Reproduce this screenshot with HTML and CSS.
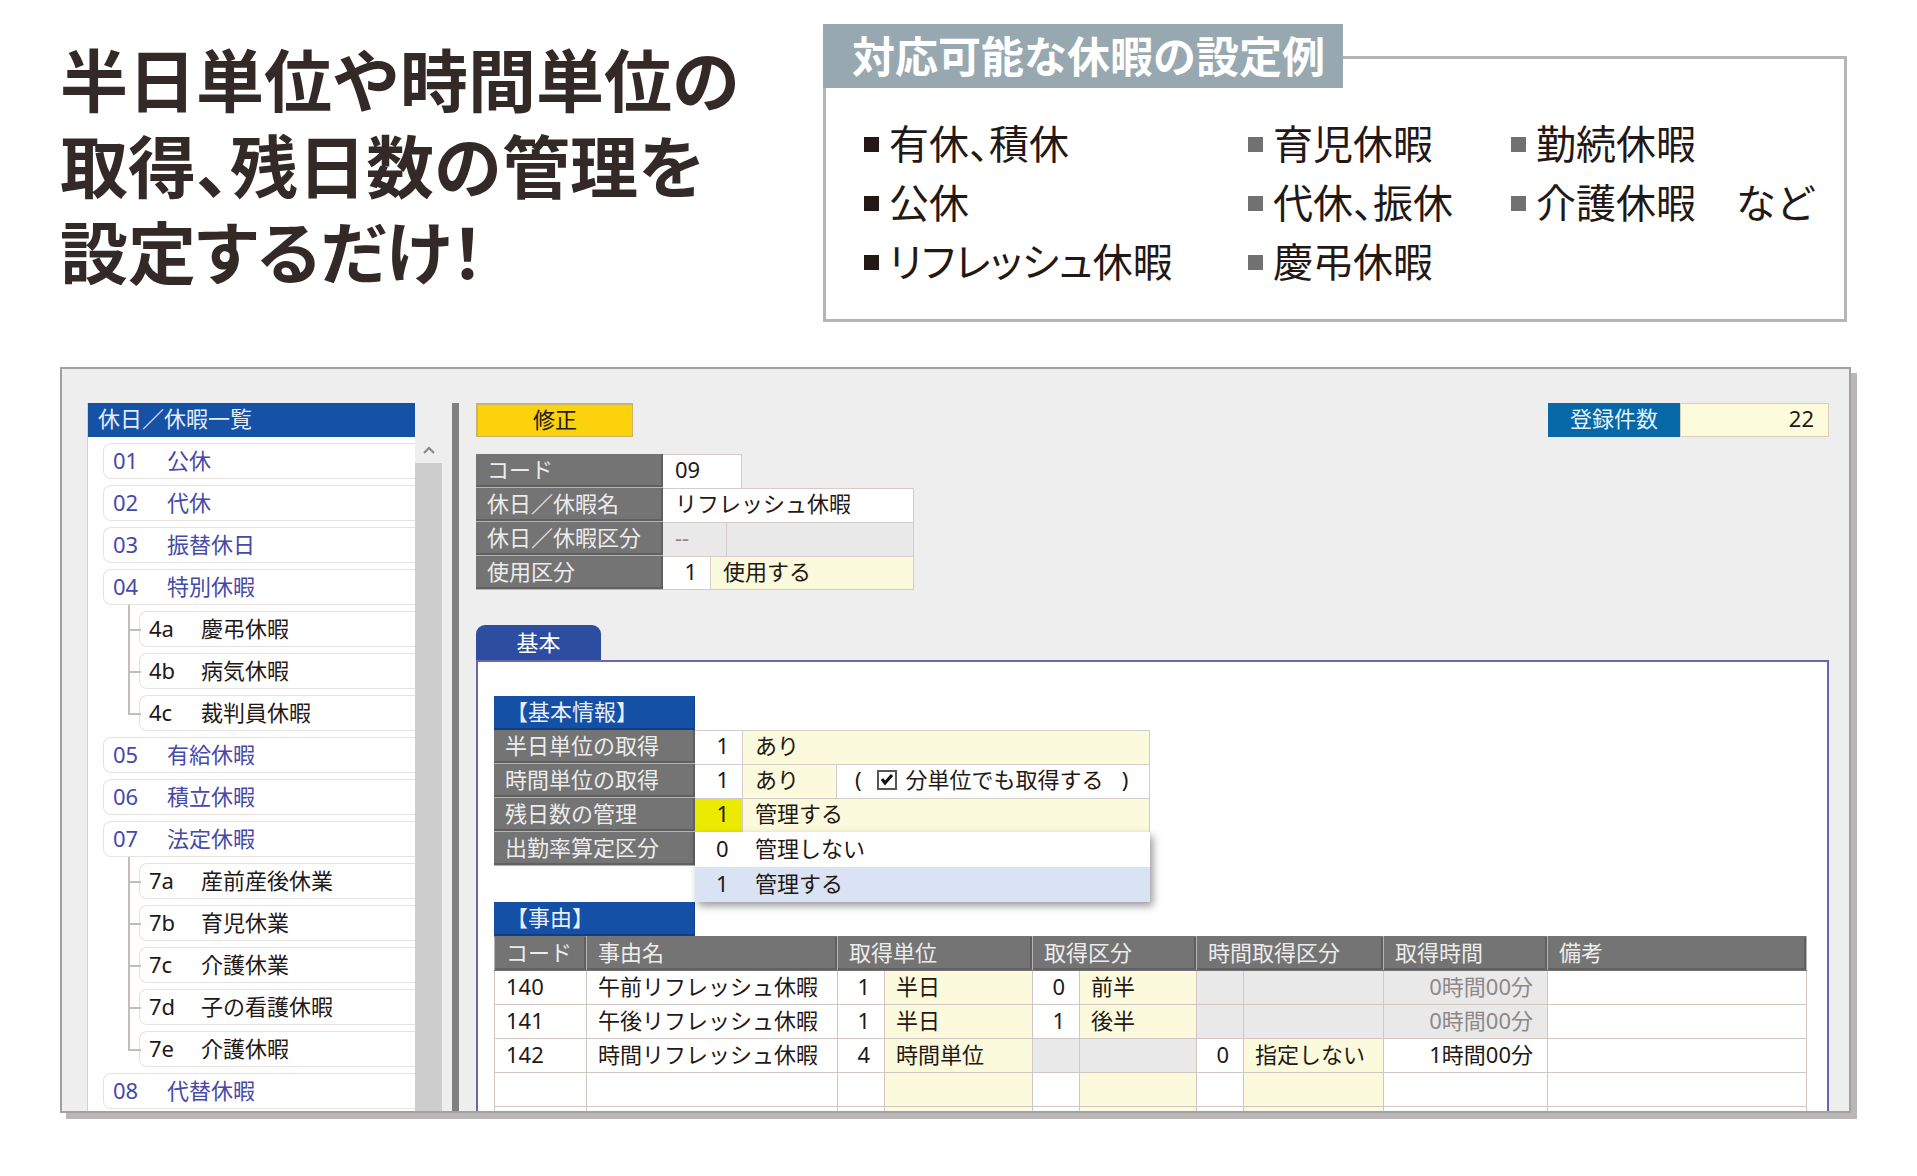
FILE: index.html
```html
<!DOCTYPE html>
<html lang="ja">
<head>
<meta charset="utf-8">
<meta name="viewport" content="width=device-width, initial-scale=1">
<title>休日／休暇の設定</title>
<link rel="stylesheet" href="styles.css">
</head>
<body>
<header class="hero">
  <h1 class="hero-title">半日単位や時間単位の<br>取得<span class="tight">、</span>残日数の管理を<br><span class="kana">設定するだけ！</span></h1>
  <section class="examples">
    <h2 class="examples-title">対応可能な休暇の設定例</h2>
    <ul class="examples-list examples-dark">
      <li>有休<span class="tight">、</span>積休</li>
      <li>公休</li>
      <li class="kana">リフレッシュ休暇</li>
    </ul>
    <ul class="examples-list">
      <li>育児休暇</li>
      <li>代休<span class="tight">、</span>振休</li>
      <li>慶弔休暇</li>
    </ul>
    <ul class="examples-list">
      <li>勤続休暇</li>
      <li>介護休暇　など</li>
    </ul>
  </section>
</header>

<main class="app">
  <nav class="sidebar" aria-labelledby="side-title">
    <h2 class="side-title" id="side-title">休日／休暇一覧</h2>
    <ul class="tree">
      <li><button class="node"><span>01</span>公休</button></li>
      <li><button class="node"><span>02</span>代休</button></li>
      <li><button class="node"><span>03</span>振替休日</button></li>
      <li><button class="node"><span>04</span>特別休暇</button>
        <ul class="branch">
          <li><button class="node"><span>4a</span>慶弔休暇</button></li>
          <li><button class="node"><span>4b</span>病気休暇</button></li>
          <li><button class="node"><span>4c</span>裁判員休暇</button></li>
        </ul>
      </li>
      <li><button class="node"><span>05</span>有給休暇</button></li>
      <li><button class="node"><span>06</span>積立休暇</button></li>
      <li><button class="node"><span>07</span>法定休暇</button>
        <ul class="branch">
          <li><button class="node"><span>7a</span>産前産後休業</button></li>
          <li><button class="node"><span>7b</span>育児休業</button></li>
          <li><button class="node"><span>7c</span>介護休業</button></li>
          <li><button class="node"><span>7d</span>子の看護休暇</button></li>
          <li><button class="node"><span>7e</span>介護休暇</button></li>
        </ul>
      </li>
      <li><button class="node"><span>08</span>代替休暇</button></li>
    </ul>
  </nav>
  <div class="scrollbar">
    <button class="scroll-up" aria-label="上へ">
      <svg width="12" height="8" viewBox="0 0 12 8" fill="none" stroke="#8c8480" stroke-width="2"><path d="M1 7 6 2l5 5"/></svg>
    </button>
    <div class="scroll-thumb"></div>
  </div>
  <div class="divider"></div>

  <div class="content">
    <div class="topbar">
      <button class="mode">修正</button>
      <dl class="count"><dt>登録件数</dt><dd>22</dd></dl>
    </div>

    <form class="fields">
      <div class="row"><label class="label" for="code">コード</label><input class="cell code" id="code" value="09"></div>
      <div class="row"><label class="label" for="name">休日／休暇名</label><input class="cell wide" id="name" value="リフレッシュ休暇"></div>
      <div class="row"><label class="label" for="kind">休日／休暇区分</label><input class="cell kind off" id="kind" value="--" disabled><output class="cell fill off"></output></div>
      <div class="row"><label class="label" for="use">使用区分</label><input class="cell num" id="use" value="1"><output class="cell fill pale">使用する</output></div>
    </form>

    <button class="tab">基本</button>
    <div class="panel">
      <form class="info">
        <h3 class="section">【基本情報】</h3>
        <div class="row"><label class="label" for="half">半日単位の取得</label><input class="cell num" id="half" value="1"><output class="cell fill pale">あり</output></div>
        <div class="row"><label class="label" for="hour">時間単位の取得</label><input class="cell num" id="hour" value="1"><output class="cell short pale">あり</output>
          <div class="cell fill minute"><span>(</span><input type="checkbox" id="minute" class="check" checked><label for="minute">分単位でも取得する</label><span class="close">)</span></div></div>
        <div class="row"><label class="label" for="rest">残日数の管理</label><input class="cell num active" id="rest" value="1"><output class="cell fill pale">管理する</output>
          <ul class="menu" role="listbox" aria-label="残日数の管理">
            <li role="option"><span>0</span>管理しない</li>
            <li role="option" aria-selected="true"><span>1</span>管理する</li>
          </ul>
        </div>
        <div class="row"><span class="label">出勤率算定区分</span></div>
      </form>

      <h3 class="section">【事由】</h3>
      <table class="reasons">
        <colgroup><col class="c-code"><col class="c-name"><col class="c-num"><col class="c-unit"><col class="c-num"><col class="c-part"><col class="c-num"><col class="c-hour"><col class="c-time"><col></colgroup>
        <thead>
          <tr><th>コード</th><th>事由名</th><th colspan="2">取得単位</th><th colspan="2">取得区分</th><th colspan="2">時間取得区分</th><th>取得時間</th><th>備考</th></tr>
        </thead>
        <tbody>
          <tr><td>140</td><td>午前リフレッシュ休暇</td><td class="right">1</td><td class="pale">半日</td><td class="right">0</td><td class="pale">前半</td><td class="off"></td><td class="off"></td><td class="right off">0時間00分</td><td></td></tr>
          <tr><td>141</td><td>午後リフレッシュ休暇</td><td class="right">1</td><td class="pale">半日</td><td class="right">1</td><td class="pale">後半</td><td class="off"></td><td class="off"></td><td class="right off">0時間00分</td><td></td></tr>
          <tr><td>142</td><td>時間リフレッシュ休暇</td><td class="right">4</td><td class="pale">時間単位</td><td class="off"></td><td class="off"></td><td class="right">0</td><td class="pale">指定しない</td><td class="right">1時間00分</td><td></td></tr>
          <tr><td></td><td></td><td></td><td class="pale"></td><td></td><td class="pale"></td><td></td><td class="pale"></td><td></td><td></td></tr>
          <tr><td></td><td></td><td></td><td class="pale"></td><td></td><td class="pale"></td><td></td><td class="pale"></td><td></td><td></td></tr>
        </tbody>
      </table>
    </div>
  </div>
</main>
</body>
</html>
```
FILE: styles.css
```css
* { box-sizing: border-box; }

body {
  margin: 0;
  height: 100vh;
  padding: 34px 66px 63px 60px;
  display: flex;
  flex-direction: column;
  background: #fff;
  color: #231815;
  font-family: "Noto Sans CJK JP", sans-serif;
}

h1, h2, h3, ul, dl, dd { margin: 0; padding: 0; font-weight: 400; }
ul { list-style: none; }

button, input {
  font: inherit;
  color: inherit;
  margin: 0;
  padding: 0;
  border: 0;
  border-radius: 0;
  background: none;
}

.tight { font-feature-settings: "halt"; }
.kana { font-feature-settings: "palt"; }

/* Headline and list of examples */
.hero {
  flex: none;
  display: grid;
  grid-template-columns: 763fr 1024fr;
  height: 333px;
  padding-right: 4px;
}

.hero-title {
  padding-top: 1px;
  font-size: 68px;
  font-weight: 700;
  line-height: 86px;
  color: #332a28;
  white-space: nowrap;
}

.examples {
  position: relative;
  height: 266px;
  margin-top: 22px;
  padding: 54px 0 0 38px;
  display: flex;
  border: 3px solid #b5b5b6;
}

.examples-title {
  position: absolute;
  left: -3px;
  top: -35px;
  padding: 0 18px 4px 29px;
  background: #97a8b1;
  color: #fff;
  font-size: 43px;
  font-weight: 700;
  line-height: 60px;
  white-space: nowrap;
}

.examples-list {
  flex: none;
  width: 263px;
  font-size: 40px;
  line-height: 59px;
  white-space: nowrap;
}

.examples-dark { width: 384px; }

.examples-list li {
  display: flex;
  align-items: center;
}

.examples-list li::before {
  content: "";
  flex: none;
  width: 15px;
  height: 15px;
  margin: 4px 10px 0 0;
  background: #727171;
}

.examples-dark li::before { background: #231815; }

/* Application window */
.app {
  flex: 1;
  min-height: 0;
  padding: 34px 20px 0 25px;
  display: flex;
  overflow: hidden;
  border: 2px solid #9fa0a0;
  box-shadow: 6px 6px 0 #bab6b6;
  background: #eee;
  font-family: "Noto Sans", "Noto Sans CJK JP", sans-serif;
  font-size: 22px;
  line-height: 32px;
}

.sidebar {
  flex: none;
  width: 328px;
  background: #fff;
  border-left: 1px solid #d8d0cc;
}

.side-title {
  height: 34px;
  padding-left: 10px;
  background: #1552a6;
  color: #e4ecf8;
  font-size: 22px;
  line-height: 30px;
}

.tree { padding: 6px 0 0 15px; }
.tree li { position: relative; }

.node {
  width: 100%;
  height: 36px;
  margin-bottom: 6px;
  padding: 0 0 2px 9px;
  display: flex;
  align-items: center;
  border: 1px solid #e8e2de;
  border-right: 0;
  border-radius: 8px 0 0 8px;
  background: #fff;
  color: #4549a8;
}

.node span {
  width: 54px;
  text-align: left;
}

.branch { padding-left: 36px; }
.branch .node { color: #231815; }
.branch .node span { width: 52px; }

/* connector lines between a node and its children */
.branch li::before {
  content: "";
  position: absolute;
  left: -11px;
  top: -24px;
  width: 11px;
  height: 42px;
  border: solid #c4bcb8;
  border-width: 0 0 2px 2px;
}

.branch li:first-child::before { top: -6px; height: 24px; }

.scrollbar {
  flex: none;
  width: 27px;
  padding-top: 34px;
  display: flex;
  flex-direction: column;
}

.scroll-up {
  height: 26px;
  display: flex;
  align-items: center;
  justify-content: center;
}

.scroll-thumb {
  flex: 1;
  background: #cdcdcd;
}

.divider {
  flex: none;
  width: 7px;
  margin: 0 17px 0 10px;
  background: #808080;
}

.content {
  flex: 1;
  min-width: 0;
}

.topbar {
  display: flex;
  justify-content: space-between;
  line-height: 30px;
}

.mode {
  width: 157px;
  height: 34px;
  padding-bottom: 4px;
  border: solid #cbb36a;
  border-width: 2px 1px 1px 2px;
  background: #fbd20c;
  color: #231815;
  line-height: 26px;
}

.count { display: flex; }

.count dt {
  width: 132px;
  height: 34px;
  background: #0768a8;
  color: #e4f0fa;
  text-align: center;
}

.count dd {
  width: 149px;
  padding-right: 14px;
  border: 1px solid #d8d0b8;
  background: #fcfbdc;
  line-height: 28px;
  text-align: right;
}

/* Rows made of a label and its value cells */
.row {
  position: relative;
  display: flex;
  height: 34px;
  line-height: 30px;
}

.label {
  padding-left: 11px;
  background: #747474;
  color: #ececec;
  border-bottom: 1px solid #b4b4b4;
  box-shadow: inset -2px -2px 0 #606060;
}

.cell {
  min-width: 0;
  padding: 0 12px 4px;
  border: solid #d4ccc8;
  border-width: 1px 1px 0 0;
  background: #fff;
  line-height: 29px;
}

.num {
  width: 48px;
  padding: 0 13px 4px 0;
  text-align: right;
}

.fill { flex: 1; }
.pale { background: #fbfadc; }
.off { background: #e9e9e9; color: #8c8888; }
.active { background: #ecea00; }

.fields {
  width: 438px;
  margin: 17px 0 35px;
}

.fields .label { width: 187px; }
.fields .row:last-child .cell { border-bottom-width: 1px; }
.code { width: 79px; }
.wide { flex: 1; }
.kind { width: 64px; }

.tab {
  display: block;
  width: 125px;
  height: 35px;
  padding-bottom: 2px;
  border-radius: 9px 9px 0 0;
  background: #2c4da0;
  color: #fff;
}

.panel {
  height: 560px;
  padding: 34px 20px 0 16px;
  border: 2px solid #6766ae;
  background: #fff;
}

.section {
  width: 201px;
  height: 34px;
  padding-left: 12px;
  background: #1450a5;
  color: #e8eefa;
  box-shadow: inset -1px -2px 0 #103f85;
  font-size: 22px;
  line-height: 30px;
  white-space: nowrap;
}

.info {
  width: 656px;
  margin-bottom: 36px;
}

.info .label { width: 201px; }
.short { width: 94px; }

.minute {
  display: flex;
  align-items: center;
  padding-left: 18px;
}

.check {
  appearance: none;
  width: 20px;
  height: 20px;
  margin: 0 9px 0 15px;
  border: 2px solid #5a5452;
  background: #fff url("data:image/svg+xml,%3Csvg xmlns='http://www.w3.org/2000/svg' viewBox='0 0 16 16' fill='none' stroke='%23111' stroke-width='3'%3E%3Cpath d='M3 7l3 4 7-8'/%3E%3C/svg%3E");
}

.close { margin-left: 18px; }

.menu {
  position: absolute;
  z-index: 1;
  top: 34px;
  left: 201px;
  right: 0;
  background: #fff;
  box-shadow: 3px 4px 8px rgba(0, 0, 0, .4);
  line-height: 32px;
}

.menu li {
  display: flex;
  height: 35px;
}

.menu li[aria-selected] { background: #d9e3f3; }

.menu span {
  width: 60px;
  padding-left: 21px;
}

.reasons {
  width: 100%;
  table-layout: fixed;
  border-collapse: collapse;
}

.c-code { width: 92px; }
.c-name { width: 251px; }
.c-num { width: 47px; }
.c-unit { width: 148px; }
.c-part { width: 117px; }
.c-hour { width: 140px; }
.c-time { width: 164px; }

.reasons th, .reasons td {
  height: 34px;
  padding: 0 0 2px 11px;
  border: 1px solid #d0c6c2;
  line-height: 31px;
  text-align: left;
  font-weight: 400;
  white-space: nowrap;
}

.reasons th {
  background: #747474;
  color: #ececec;
  border-color: #747474 #b4b4b4;
  box-shadow: inset -2px -2px 0 #606060;
}

.reasons .right {
  padding: 0 14px 2px 0;
  text-align: right;
}
```
